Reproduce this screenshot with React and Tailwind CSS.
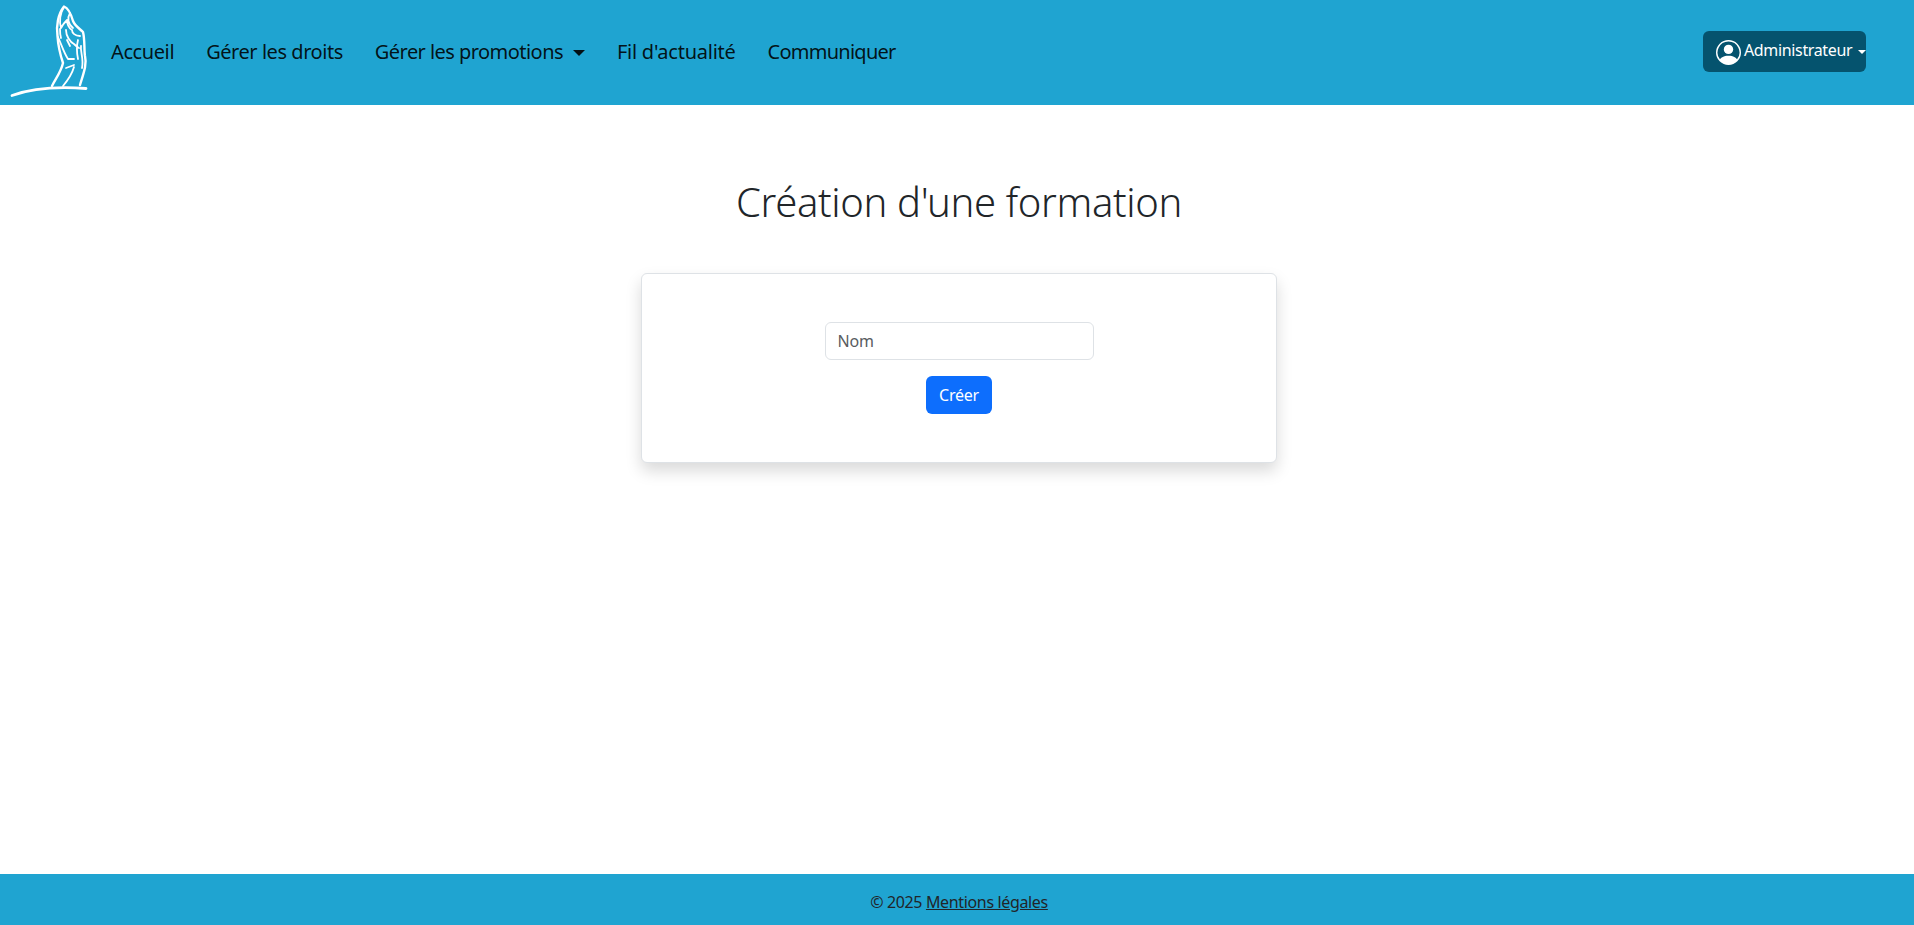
const navItems = [
  { label: "Accueil", cls: "tracking-[-0.4px]" },
  { label: "Gérer les droits", cls: "tracking-[-0.45px]" },
  { label: "Gérer les promotions", cls: "tracking-[-0.55px]" },
  { label: "Fil d'actualité", cls: "tracking-[-0.25px]" },
  { label: "Communiquer", cls: "tracking-[-0.75px]" },
];

// main hand logo, traced by hand from the screenshot
function Logo() {
  return (
    <svg width="96" height="105" viewBox="0 0 96 105" fill="none" stroke="white" strokeLinecap="round" strokeLinejoin="round" className="shrink-0">
      <path d="M12 95.5 C30 89 52 86 86 88.5" strokeWidth="2.8" />
      <path d="M52 86 C56 78 61 72 63 63 C60 54 58 44 57.5 36 C56 26 58 14 64 6.5 C68 8 71 14 73 21 C75 26 80 29 83 32 C85 40 84 50 85 56 C87 64 84 72 80 85" strokeWidth="2.4" />
      <path d="M64 7 C60 13 59 22 61 28 C63 24 65 22 67 20 C67 25 69 28 72 30 C72 33 75 36 80 36 M70 13 C67 18 68 24 73 28 M58 37 C62 46 64 53 68 59 L74 59 M66 30 C66 36 70 42 74 44 C76 46 77 47 79 48 M67 40 L70 46 M78 40 C76 48 77 54 78 59 M81 46 C80 52 84 58 82 68 M74 67 C72 74 68 80 63 86 M66 68 L74 65 M60 29 C60 33 60 35 61 38" strokeWidth="1.8" />
    </svg>
  );
}

export default function App() {
  return (
    <div className="flex min-h-[925px] flex-col bg-white font-['Noto_Sans',sans-serif] text-[#212529]">
      <header className="flex h-[105px] items-center bg-[#1fa4d1] pr-[48px]">
        <Logo />
        <nav className="mb-[2px] ml-[15px] flex items-center gap-[32px] text-[20px] text-black/90">
          {navItems.map((item) => (
            <a key={item.label} href="#" className={"flex items-center " + item.cls}>
              {item.label}
              {item.label === "Gérer les promotions" && (
                <span className="ml-[10px] mt-[2px] h-0 w-0 border-x-[6px] border-t-[6px] border-x-transparent border-t-black/90" />
              )}
            </a>
          ))}
        </nav>
        <button className="mb-[2px] ml-auto flex h-[41px] w-[163px] items-center rounded-md bg-[#05536e] pl-[13px] text-[16px] text-white">
          <svg width="25" height="25" viewBox="0 0 16 16" fill="white" className="mt-[2px] shrink-0">
            <path d="M11 6a3 3 0 1 1-6 0 3 3 0 0 1 6 0z" />
            <path fillRule="evenodd" d="M0 8a8 8 0 1 1 16 0A8 8 0 0 1 0 8zm8-7a7 7 0 0 0-5.468 11.37C3.242 11.226 4.805 10 8 10s4.757 1.225 5.468 2.37A7 7 0 0 0 8 1z" />
          </svg>
          <span className="mb-[3px] ml-[3px] tracking-[-0.35px]">Administrateur</span>
          <span className="ml-[6px] h-0 w-0 border-x-[4px] border-t-[4px] border-x-transparent border-t-white" />
        </button>
      </header>

      <main className="flex flex-1 flex-col items-center pl-[4px]">
        <h1 className="mt-[73px] text-[40px] font-light leading-[48px] tracking-[-0.35px]">Création d'une formation</h1>
        <div className="mt-[47px] flex w-[636px] flex-col items-center rounded-md border border-[#dee2e6] bg-white py-[48px] shadow-[0_8px_16px_rgba(0,0,0,0.15)]">
          <input
            placeholder="Nom"
            className="h-[38px] w-[269px] rounded-md border border-[#dee2e6] px-[12px] text-[16px] tracking-[-0.2px] outline-none placeholder:text-[#595c5f]"
          />
          <button className="mt-[16px] h-[38px] w-[66px] rounded-md bg-[#0d6efd] text-[16px] tracking-[-0.2px] text-white">Créer</button>
        </div>
      </main>

      <footer className="flex h-[51px] items-center justify-center bg-[#1fa4d1] pl-[4px] pt-[5px] text-[16px] text-[#212529]">
        <span className="tracking-[-0.35px]">© 2025 <a href="#" className="underline">Mentions légales</a></span>
      </footer>
    </div>
  );
}
